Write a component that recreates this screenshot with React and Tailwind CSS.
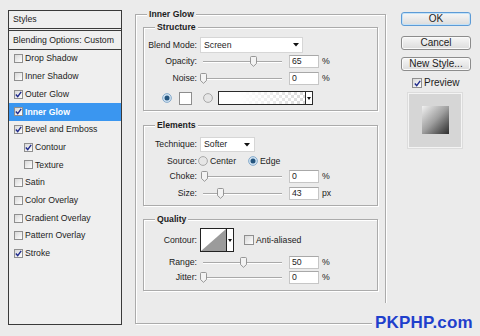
import React from "react";

function Check({ checked, big }) {
  return (
    <span
      className={
        (big ? "w-[10px] h-[10px] " : "w-[9px] h-[9px] ") +
        "border border-[#8f8f8f] bg-linear-to-br from-[#d8d8d8] to-white flex items-center justify-center shrink-0"
      }
    >
      {checked && (
        <svg width="7" height="7" viewBox="0 0 7 7">
          <path d="M0.8 3.6 L2.7 5.6 L6.2 0.9" stroke="#1f2a8c" strokeWidth="1.4" fill="none" />
        </svg>
      )}
    </span>
  );
}

function Radio({ on, className }) {
  return (
    <svg width="10" height="10" viewBox="0 0 10 10" className={"shrink-0 " + (className || "")}>
      <circle cx="5" cy="5" r="4.4" fill={on ? "#cfe2f2" : "#e6e6e6"} stroke={on ? "#7fa6c8" : "#a2a2a2"} strokeWidth="0.9" />
      {on && <circle cx="5" cy="5" r="2.5" fill="#24557f" />}
    </svg>
  );
}

function Arrow() {
  return (
    <svg width="6" height="4" viewBox="0 0 6 4" className="shrink-0">
      <path d="M0 0 H6 L3 3.5 Z" fill="#111" />
    </svg>
  );
}

function Label({ children }) {
  return <span className="w-[53px] text-right shrink-0">{children}</span>;
}

function Slider({ pos }) {
  return (
    <div className="relative w-[86px] h-[13px] ml-[3px] shrink-0">
      <div className="absolute left-[3px] right-[4px] top-[6px] h-px bg-[#a9a9a9] shadow-[0_1px_0_#ffffff]" />
      <svg className="absolute top-[1px]" style={{ left: pos - 3.5 }} width="7" height="11" viewBox="0 0 7 11">
        <path
          d="M1.5 0.5 H5.5 A1 1 0 0 1 6.5 1.5 V7.5 L3.5 10.3 L0.5 7.5 V1.5 A1 1 0 0 1 1.5 0.5 Z"
          fill="#f3f3f3"
          stroke="#8c8c8c"
          strokeWidth="0.9"
        />
      </svg>
    </div>
  );
}

function Input({ value }) {
  return (
    <div className="ml-[3px] w-[30px] h-[13px] bg-white border border-[#c6c6c6] border-t-[#a8a8a8] pl-[2px] flex items-center shrink-0">
      {value}
    </div>
  );
}

function SliderRow({ label, pos, value, unit, className }) {
  return (
    <div className={"flex items-center h-[13px] " + className}>
      <Label>{label}</Label>
      <Slider pos={pos} />
      <Input value={value} />
      <span className="ml-[3px]">{unit}</span>
    </div>
  );
}

function Group({ title, className, children }) {
  return (
    <div
      className={
        "border border-[#ababab] shadow-[inset_1px_1px_0_#ffffff,1px_1px_0_#ffffff] flex flex-col shrink-0 " + className
      }
    >
      <div className="-mt-[6px] ml-[11px] px-[2px] bg-[#ebebeb] self-start font-bold leading-[10px] h-[10px]">{title}</div>
      {children}
    </div>
  );
}

const items = [
  { t: "Drop Shadow", c: false },
  { t: "Inner Shadow", c: false },
  { t: "Outer Glow", c: true },
  { t: "Inner Glow", c: true, sel: true },
  { t: "Bevel and Emboss", c: true },
  { t: "Contour", c: true, ind: true },
  { t: "Texture", c: false, ind: true },
  { t: "Satin", c: false },
  { t: "Color Overlay", c: false },
  { t: "Gradient Overlay", c: false },
  { t: "Pattern Overlay", c: false },
  { t: "Stroke", c: true },
];

function LeftPanel() {
  return (
    <div className="ml-[8px] mt-[10px] w-[114px] h-[315px] border border-[#3a3a3a] bg-[#efefef] flex flex-col shrink-0">
      <div className="h-[20px] pl-[4px] pb-[1px] flex items-center border-b-[3px] border-double border-[#3a3a3a]">Styles</div>
      <div className="h-[19px] pl-[4px] flex items-center border-b border-[#3a3a3a]">Blending Options: Custom</div>
      {items.map((it) => (
        <div
          key={it.t}
          className={
            "h-[17.7px] flex items-center " +
            (it.ind ? "pl-[15px] " : "pl-[5px] ") +
            (it.sel ? "bg-[#3a96f0] text-white font-bold" : "")
          }
        >
          <Check checked={it.c} />
          <span className="ml-[2px]">{it.t}</span>
        </div>
      ))}
    </div>
  );
}

function Middle() {
  return (
    <Group title="Inner Glow" className="ml-[13px] mt-[14px] w-[251px] h-[310px]">
      <Group title="Structure" className="ml-[7px] mt-[8px] w-[235px] h-[84px]">
        <div className="flex items-center mt-[5px] h-[16px]">
          <Label>Blend Mode:</Label>
          <div className="ml-[3px] w-[103px] h-[16px] bg-white border border-[#d6d6d6] flex items-center pl-[3px]">
            <span>Screen</span>
            <span className="ml-auto mr-[3px] flex">
              <Arrow />
            </span>
          </div>
        </div>
        <SliderRow label="Opacity:" pos={53} value="65" unit="%" className="mt-[2px]" />
        <SliderRow label="Noise:" pos={3} value="0" unit="%" className="mt-[4px]" />
        <div className="flex items-center mt-[6px] h-[14px]">
          <Radio on className="ml-[18px]" />
          <div className="ml-[7px] w-[13px] h-[13px] bg-white border border-[#8d8d8d]" />
          <Radio className="ml-[11px]" />
          <div className="ml-[5px] w-[95px] h-[14px] border border-[#2a2a2a] flex bg-[image:repeating-conic-gradient(#dadada_0_25%,#ffffff_0_50%)] bg-[length:6px_6px] bg-size-[6px_6px]">
            <div className="flex-1 bg-linear-to-r from-white from-25% to-white/0" />
            <div className="w-[7px] border-l border-[#2a2a2a] bg-white flex items-center justify-center">
              <svg width="4" height="3" viewBox="0 0 4 3">
                <path d="M0 0 H4 L2 3 Z" fill="#111" />
              </svg>
            </div>
          </div>
        </div>
      </Group>

      <Group title="Elements" className="ml-[7px] mt-[14px] w-[235px] h-[81px]">
        <div className="flex items-center mt-[7px] h-[15px]">
          <Label>Technique:</Label>
          <div className="ml-[3px] w-[55px] h-[15px] bg-white border border-[#d6d6d6] flex items-center pl-[3px]">
            <span>Softer</span>
            <span className="ml-auto mr-[4px] flex">
              <Arrow />
            </span>
          </div>
        </div>
        <div className="flex items-center mt-[4px] h-[10px]">
          <Label>Source:</Label>
          <Radio className="ml-[1px]" />
          <span className="ml-[2px]">Center</span>
          <Radio on className="ml-[12px]" />
          <span className="ml-[2px]">Edge</span>
        </div>
        <SliderRow label="Choke:" pos={4} value="0" unit="%" className="mt-[4px]" />
        <SliderRow label="Size:" pos={20} value="43" unit="px" className="mt-[4px]" />
      </Group>

      <Group title="Quality" className="ml-[7px] mt-[13px] w-[235px] h-[72px]">
        <div className="flex items-center mt-[4px] h-[24px]">
          <Label>Contour:</Label>
          <div className="ml-[3px] w-[34px] h-[24px] border border-[#222222] flex bg-white">
            <svg width="25" height="22" viewBox="0 0 25 22" className="shrink-0">
              <polygon points="0,22 25,0 25,22" fill="#9b9b9b" />
            </svg>
            <div className="flex-1 border-l border-[#222222] flex items-center justify-center">
              <svg width="4" height="3" viewBox="0 0 4 3">
                <path d="M0 0 H4 L2 3 Z" fill="#111" />
              </svg>
            </div>
          </div>
          <span className="ml-[10px]">
            <Check big />
          </span>
          <span className="ml-[2px]">Anti-aliased</span>
        </div>
        <SliderRow label="Range:" pos={43} value="50" unit="%" className="mt-[4px]" />
        <SliderRow label="Jitter:" pos={3} value="0" unit="%" className="mt-[2px]" />
      </Group>
    </Group>
  );
}

function Btn({ children, primary, className }) {
  return (
    <div
      className={
        "w-[70px] h-[14px] rounded-[3px] border flex items-center justify-center text-[10px] bg-linear-to-b from-[#f7f7f7] to-[#dcdcdc] " +
        (primary ? "border-[#5d9bd6] shadow-[inset_0_0_0_1px_#c3e2f8] " : "border-[#8c8c8c] shadow-[inset_0_0_0_1px_#fafafa] ") +
        (className || "")
      }
    >
      {children}
    </div>
  );
}

function Right() {
  return (
    <div className="ml-[15px] flex flex-col shrink-0">
      <Btn primary className="mt-[12px]">OK</Btn>
      <Btn className="mt-[10px]">Cancel</Btn>
      <Btn className="mt-[7px]">New Style...</Btn>
      <div className="flex items-center mt-[7px] h-[10px] ml-[11px] text-[10px]">
        <Check checked big />
        <span className="ml-[2px]">Preview</span>
      </div>
      <div className="mt-[5px] ml-[7px] w-[54px] h-[55px] border border-[#f4f4f4] bg-[#d6d6d6] shadow-[0_0_0_1px_#dcdcdc]">
        <div className="ml-[13px] mt-[12px] w-[27px] h-[28px] bg-linear-135 from-[#f2f2f2] via-[#9e9e9e] via-50% to-[#2e2e2e]" />
      </div>
    </div>
  );
}

export default function App() {
  return (
    <div className="w-[480px] h-[336px] bg-[#ebebeb] relative overflow-hidden flex items-start font-['Liberation_Sans',Arial,sans-serif] text-[8.7px] text-[#1c1c1c] leading-none">
      <LeftPanel />
      <Middle />
      <Right />
      <div className="absolute left-[372px] top-[303px] pt-[11px] px-[3px] bg-[#ebebeb] font-bold text-[17px] leading-[17px] text-[#1f3fcc] tracking-[0.2px]">
        PKPHP.com
      </div>
    </div>
  );
}
